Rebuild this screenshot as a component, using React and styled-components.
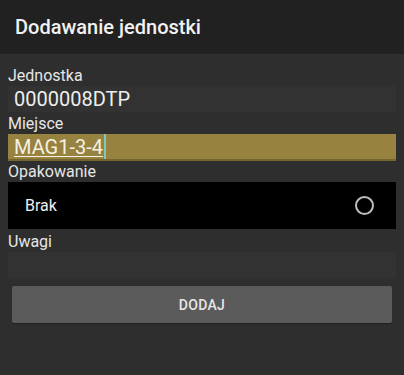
import React from "react";
import styled, { createGlobalStyle } from "styled-components";

const Global = createGlobalStyle`
  html, body { margin: 0; padding: 0; background: #2e2e2e; }
  body { font-family: Roboto, "Noto Sans", sans-serif; width: 404px; height: 375px; overflow: hidden; }
`;

const Screen = styled.div`
  width: 404px;
  height: 375px;
  background: #2e2e2e;
  display: flex;
  flex-direction: column;
`;

const Header = styled.div`
  height: 54px;
  background: #212121;
  display: flex;
  align-items: center;
  padding-left: 15px;
  color: #f2f2f2;
  font-size: 20px;
  font-weight: 500;
`;

const Form = styled.div`
  display: flex;
  flex-direction: column;
  padding: 8px 8px 0 8px;
`;

const Label = styled.div`
  height: ${p => p.$h || 22}px;
  line-height: 20px;
  display: flex;
  align-items: flex-end;
  color: #e6e6e6;
  font-size: 16px;
  box-sizing: border-box;
`;

const Field = styled.div`
  height: 26px;
  background: #323232;
  color: #eeeeee;
  font-size: 20px;
  line-height: 26px;
  padding-left: 6px;
`;

const ActiveField = styled.div`
  height: 27px;
  box-sizing: border-box;
  background: #978240;
  border-bottom: 2px solid #76662f;
  color: #f5f0e0;
  font-size: 20px;
  line-height: 26px;
  padding-left: 6px;
  display: flex;
  align-items: flex-start;
`;

const Underlined = styled.span`
  text-decoration: underline;
  text-decoration-thickness: 1px;
  text-underline-offset: 2px;
`;

const Cursor = styled.span`
  width: 2px;
  height: 25px;
  background: #7fc8c0;
  margin-left: 1px;
`;

const Choice = styled.div`
  height: 47px;
  background: #000;
  display: flex;
  align-items: center;
  justify-content: space-between;
  padding: 0 22px 0 17px;
  color: #f0f0f0;
  font-size: 16px;
`;

const Radio = styled.span`
  width: 15px;
  height: 15px;
  border: 2px solid #bdbdbd;
  border-radius: 50%;
`;

const Button = styled.button`
  margin: 8px 4px 0 4px;
  height: 37px;
  background: #5b5b5b;
  border: none;
  border-radius: 2px;
  color: #e6e6e6;
  font-family: Roboto, sans-serif;
  font-weight: 500;
  font-size: 14px;
  letter-spacing: 0.3px;
  box-shadow: 0 1px 1px rgba(0,0,0,0.3);
`;

export default function App() {
  return (
    <Screen>
      <Global />
      <Header>Dodawanie jednostki</Header>
      <Form>
        <Label $h={24}>Jednostka</Label>
        <Field>0000008DTP</Field>
        <Label>Miejsce</Label>
        <ActiveField>
          <Underlined>MAG1-3-4</Underlined>
          <Cursor />
        </ActiveField>
        <Label $h={21}>Opakowanie</Label>
        <Choice>
          <span>Brak</span>
          <Radio />
        </Choice>
        <Label $h={23}>Uwagi</Label>
        <Field />
        <Button>DODAJ</Button>
      </Form>
    </Screen>
  );
}
